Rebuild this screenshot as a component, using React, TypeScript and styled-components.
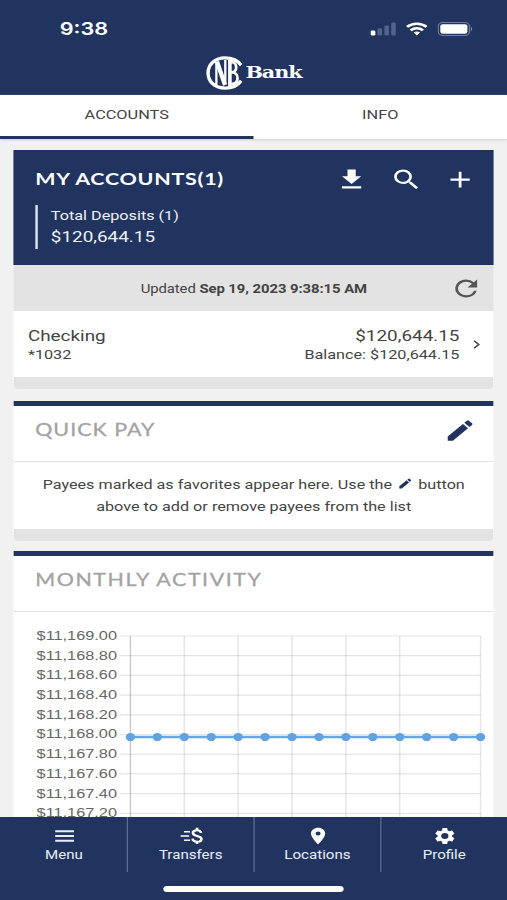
import React from "react";
import styled, { createGlobalStyle } from "styled-components";

const navy = "#21345f";

const GlobalStyle = createGlobalStyle`
  * { box-sizing: border-box; }
  html, body { margin: 0; padding: 0; overflow: hidden; background: #f1f1f1; }
  svg { display: block; flex: none; }
`;

const Page = styled.div`
  width: 416px;
  height: 900px;
  transform: scaleX(1.21875);
  transform-origin: 0 0;
  display: flex;
  flex-direction: column;
  overflow: hidden;
  background: #f1f1f1;
  color: #444;
  font-family: Roboto, "Liberation Sans", sans-serif;
`;

const Header = styled.header`
  flex: none;
  height: 95px;
  background: ${navy};
  color: #fff;
`;

const StatusBar = styled.div`
  height: 56px;
  padding: 1px 28.5px 0 49px;
  display: flex;
  align-items: center;
  justify-content: space-between;
`;

const Clock = styled.span`
  font: 600 17.8px/20px Inter, sans-serif;
`;

const StatusIcons = styled.div`
  display: flex;
  align-items: center;
  gap: 8px;
`;

const Brand = styled.div`
  height: 33px;
  padding-left: 168.5px;
  display: flex;
  align-items: center;
  gap: 2.5px;
`;

const BrandName = styled.span`
  font: bold 17px/20px "DejaVu Serif", serif;
  letter-spacing: -0.9px;
  padding-bottom: 1px;
`;

const Tabs = styled.nav`
  flex: none;
  height: 44px;
  display: flex;
  background: #fff;
  box-shadow: 0 1px 2px #ccc;
`;

const Tab = styled.div<{ $active?: boolean }>`
  flex: 1;
  padding-top: 10px;
  text-align: center;
  font-size: 13.4px;
  line-height: 20px;
  border-bottom: 3px solid ${(p) => (p.$active ? navy : "transparent")};
`;

const Content = styled.main`
  flex: 1;
  min-height: 0;
  overflow: hidden;
  padding: 11px 11px 0 11.4px;
`;

const Card = styled.section<{ $accent?: boolean }>`
  background: #fff;
  border-top: ${(p) => (p.$accent ? `5px solid ${navy}` : "0")};
  border-bottom: 12px solid #e3e3e3;
  border-radius: 0 0 4px 4px;
  margin-bottom: ${(p) => (p.$accent ? "10px" : "12px")};
`;

const Summary = styled.div`
  height: 115px;
  padding: 15px 14px 0 17.5px;
  background: ${navy};
  color: #fff;
`;

const TitleRow = styled.div`
  height: 28px;
  display: flex;
  align-items: center;
  justify-content: space-between;
`;

const Title = styled.h2<{ $spacing: number; $strong?: boolean }>`
  margin: 0;
  font-family: Lato, sans-serif;
  font-size: 17.6px;
  line-height: 24px;
  font-weight: ${(p) => (p.$strong ? 700 : 400)};
  -webkit-text-stroke: ${(p) => (p.$strong ? "0" : "0.3px #a3a3a3")};
  letter-spacing: ${(p) => p.$spacing}px;
`;

const Actions = styled.div`
  display: flex;
  gap: 17.5px;
`;

const Deposits = styled.div`
  height: 44px;
  margin-top: 11.5px;
  padding: 1.6px 0 0 10.8px;
  border-left: 2.5px solid #dfe4f2;
  color: #eef1fa;
`;

const Line = styled.div<{ $size: number; $height: number; $spacing?: number }>`
  font-size: ${(p) => p.$size}px;
  line-height: ${(p) => p.$height}px;
  letter-spacing: ${(p) => p.$spacing ?? 0}px;
  white-space: nowrap;
`;

const Updated = styled.div`
  height: 46px;
  padding: 1px 9px 0 104px;
  display: flex;
  align-items: center;
  justify-content: space-between;
  background: #e3e3e3;
  color: #444;
`;

const AccountRow = styled.div`
  height: 66px;
  padding: 14.5px 11px 0 11.5px;
  display: flex;
`;

const Amounts = styled.div`
  margin-left: auto;
  margin-right: 11px;
  text-align: right;
`;

const ChevronSlot = styled.div`
  padding-top: 14px;
`;

const CardHeader = styled.div`
  height: 56px;
  padding: 10px 14px 0 17.5px;
  border-bottom: 1.5px solid #e3e3e3;
  color: #a3a3a3;
`;

const Message = styled.div`
  height: 67px;
  padding-top: 12.4px;
  text-align: center;
`;

const InlineIcon = styled.span`
  display: inline-block;
  vertical-align: -1px;
  margin: 0 1px;
`;

const BottomBar = styled.footer`
  flex: none;
  height: 83px;
  background: ${navy};
  color: #e8edfa;
`;

const NavItems = styled.div`
  height: 55px;
  display: flex;
`;

const NavItem = styled.div`
  flex: 1;
  padding-top: 9px;
  display: flex;
  flex-direction: column;
  align-items: center;
  border-left: 1px solid #5f7097;
  &:first-child { border-color: transparent; }
`;

const HomeIndicator = styled.div`
  width: 148px;
  height: 6px;
  margin: 14px auto 0;
  border-radius: 3px;
  background: #fff;
`;

const Icon = ({ d, size = 27, color = "#fff" }: { d: string; size?: number; color?: string }) => (
  <svg width={size} height={size} viewBox="0 0 24 24" fill={color}><path d={d} /></svg>
);

const paths = {
  download: "M19 9h-4V3H9v6H5l7 7 7-7zM5 18v2h14v-2H5z",
  search: "M15.5 14h-.79l-.28-.27A6.471 6.471 0 0 0 16 9.5 6.5 6.5 0 1 0 9.5 16c1.61 0 3.09-.59 4.23-1.57l.27.28v.79l5 4.99L20.49 19l-4.99-5zm-6 0C7.01 14 5 11.99 5 9.5S7.01 5 9.5 5 14 7.01 14 9.5 11.99 14 9.5 14z",
  add: "M19 13h-6v6h-2v-6H5v-2h6V5h2v6h6v2z",
  refresh: "M17.65 6.35A7.958 7.958 0 0 0 12 4a8 8 0 1 0 7.73 10h-2.08A5.99 5.99 0 0 1 12 18a6 6 0 1 1 0-12c1.66 0 3.14.69 4.22 1.78L13 11h7V4l-2.35 2.35z",
  edit: "M3 17.25V21h3.75L17.81 9.94l-3.75-3.75L3 17.25zM20.71 7.04a.996.996 0 0 0 0-1.41l-2.34-2.34a.996.996 0 0 0-1.41 0l-1.83 1.83 3.75 3.75 1.83-1.83z",
  place: "M12 2C8.13 2 5 5.13 5 9c0 5.25 7 13 7 13s7-7.75 7-13c0-3.87-3.13-7-7-7zm0 9.5a2.5 2.5 0 0 1 0-5 2.5 2.5 0 0 1 0 5z",
  settings: "M19.14 12.94c.04-.3.06-.61.06-.94s-.02-.64-.07-.94l2.03-1.58a.49.49 0 0 0 .12-.61l-1.92-3.32a.488.488 0 0 0-.59-.22l-2.39.96c-.5-.38-1.03-.7-1.62-.94l-.36-2.54a.484.484 0 0 0-.48-.41h-3.84c-.24 0-.43.17-.47.41l-.36 2.54c-.59.24-1.13.57-1.62.94l-2.39-.96c-.22-.08-.47 0-.59.22L2.74 8.87c-.12.21-.08.47.12.61l2.03 1.58c-.05.3-.09.63-.09.94s.02.64.07.94l-2.03 1.58a.49.49 0 0 0-.12.61l1.92 3.32c.12.22.37.29.59.22l2.39-.96c.5.38 1.03.7 1.62.94l.36 2.54c.05.24.24.41.48.41h3.84c.24 0 .44-.17.47-.41l.36-2.54c.59-.24 1.13-.56 1.62-.94l2.39.96c.22.08.47 0 .59-.22l1.92-3.32a.49.49 0 0 0-.12-.61l-2.01-1.58zM12 15.6A3.6 3.6 0 1 1 12 8.4a3.6 3.6 0 0 1 0 7.2z",
};

const Signal = () => (
  <svg width="21" height="14" viewBox="0 0 21 14" fill="#52638c">
    <rect x="0" y="8.5" width="4" height="5" rx="1.2" fill="#fff" />
    <rect x="5.8" y="6.2" width="3.7" height="7.3" rx="1.2" />
    <rect x="11.4" y="3.4" width="3.7" height="10.1" rx="1.2" />
    <rect x="17" y="0.5" width="3.7" height="13" rx="1.2" />
  </svg>
);

const Wifi = () => (
  <svg width="18" height="14" viewBox="0 0 18 14" fill="none" stroke="#fff" strokeWidth="2.5">
    <path d="M1 4.9C5.4.6 12.6.6 17 4.9" />
    <path d="M4 8.3c2.8-2.7 7.2-2.7 10 0" />
    <path d="M6.4 10.5c1.5-1.4 3.7-1.4 5.2 0L9 13.6z" fill="#fff" stroke="none" />
  </svg>
);

const Battery = () => (
  <svg width="29" height="14" viewBox="0 0 29 14">
    <rect x="0.6" y="0.6" width="25.6" height="12.8" rx="3.6" fill="none" stroke="#6f7da0" />
    <rect x="2.3" y="2.2" width="22.2" height="9.6" rx="2" fill="#fff" />
    <path d="M27.4 4.9c1.4.6 1.4 3.6 0 4.2z" fill="#8792b0" />
  </svg>
);

const Monogram = () => (
  <svg width="30.4" height="34" viewBox="0 0 37 34" preserveAspectRatio="none" fill="none" stroke="#fff">
    <path d="M35.2 9.2C31.5 4 26 1.9 19 1.9 9 1.9 2.1 8.3 2.1 17s6.9 15.1 16.9 15.1c7 0 12.5-2.2 16.2-7.4" strokeWidth="3.4" />
    <path d="M10.4 6v23M19.3 4v24" strokeWidth="2.3" />
    <path d="M11 5.5 19 29" strokeWidth="4.2" />
    <path d="M23.9 4v26" strokeWidth="3.6" />
    <path d="M23 6.2h3c5.6 0 5.6 10.1 0 10.1h-2M26 16.3c7.4 0 7.4 11.5 0 11.5h-3" strokeWidth="2.7" />
  </svg>
);

const Chevron = () => (
  <svg width="6" height="9" viewBox="0 0 6 9" fill="none" stroke="#444" strokeWidth="1.4">
    <path d="M1 .8 4.8 4.5 1 8.2" />
  </svg>
);

const MenuLines = () => (
  <svg width="20" height="20" viewBox="0 0 20 20" stroke="#e8edfa" strokeWidth="1.9">
    <path d="M2.3 5.3h15.4M2.3 10h15.4M2.3 14.7h15.4" />
  </svg>
);

const TransferMoney = () => (
  <svg width="20" height="20" viewBox="0 0 20 20" fill="none" stroke="#fff" strokeWidth="1.6">
    <path d="M4 5.8h5M1.2 10h7M4 14.2h5" />
    <path d="M18 6.9c-.3-1.8-1.5-2.7-3.3-2.7-2 0-3.4 1-3.4 2.7 0 4 7 2 7 6 0 1.8-1.4 2.8-3.5 2.8-2.2 0-3.6-1-3.8-3M14.7 1.8v2.6M14.7 15.5V18" strokeWidth="2.1" />
  </svg>
);

const rows = ["$11,169.00", "$11,168.80", "$11,168.60", "$11,168.40", "$11,168.20", "$11,168.00", "$11,167.80", "$11,167.60", "$11,167.40", "$11,167.20"];
const firstX = 96;
const step = 22.1;
const topY = 24;
const rowStep = 19.7;
const points = Array.from({ length: 14 }, (_, i) => firstX + i * step);

const ActivityChart = () => (
  <svg width="393" height="225" viewBox="0 0 393 225">
    <g stroke="#000" strokeOpacity="0.1" strokeWidth="1.2">
      {rows.map((r, i) => <line key={r} x1="87" x2="383.5" y1={topY + i * rowStep} y2={topY + i * rowStep} />)}
      {[2, 4, 6, 8, 10, 13].map((i) => <line key={i} x1={points[i]} x2={points[i]} y1={topY} y2="225" />)}
      <line x1={firstX} x2={firstX} y1={topY} y2="225" strokeOpacity="0.2" />
    </g>
    <g fill="#666" fontFamily="Liberation Sans, Arial, sans-serif" fontSize="13.4" textAnchor="end">
      {rows.map((r, i) => <text key={r} x="85" y={topY + i * rowStep + 4}>{r}</text>)}
    </g>
    <line x1={firstX} x2={points[13]} y1="125" y2="125" stroke="#69a7e2" strokeWidth="2.4" />
    {points.map((x) => <ellipse key={x} cx={x} cy="125" rx="3.8" ry="4.1" fill="#61a2e0" />)}
  </svg>
);

const navItems = [
  { label: "Menu", icon: <MenuLines /> },
  { label: "Transfers", icon: <TransferMoney /> },
  { label: "Locations", icon: <Icon d={paths.place} size={20} /> },
  { label: "Profile", icon: <Icon d={paths.settings} size={20} /> },
];

export default function App() {
  return (
    <>
      <GlobalStyle />
      <Page>
        <Header>
          <StatusBar>
            <Clock>9:38</Clock>
            <StatusIcons><Signal /><Wifi /><Battery /></StatusIcons>
          </StatusBar>
          <Brand><Monogram /><BrandName>Bank</BrandName></Brand>
        </Header>
        <Tabs>
          <Tab $active>ACCOUNTS</Tab>
          <Tab>INFO</Tab>
        </Tabs>
        <Content>
          <Card>
            <Summary>
              <TitleRow>
                <Title $spacing={0.6} $strong>MY ACCOUNTS(1)</Title>
                <Actions>
                  <Icon d={paths.download} />
                  <Icon d={paths.search} />
                  <Icon d={paths.add} />
                </Actions>
              </TitleRow>
              <Deposits>
                <Line $size={13.3} $height={20}>Total Deposits (1)</Line>
                <Line $size={15.5} $height={23}>$120,644.15</Line>
              </Deposits>
            </Summary>
            <Updated>
              <Line $size={12.2} $height={20} $spacing={-0.05}>Updated <b>Sep 19, 2023 9:38:15 AM</b></Line>
              <Icon d={paths.refresh} color="#555" />
            </Updated>
            <AccountRow>
              <div>
                <Line $size={15.5} $height={20}>Checking</Line>
                <Line $size={13.3} $height={17}>*1032</Line>
              </div>
              <Amounts>
                <Line $size={15.5} $height={20}>$120,644.15</Line>
                <Line $size={13.3} $height={17}>Balance: $120,644.15</Line>
              </Amounts>
              <ChevronSlot><Chevron /></ChevronSlot>
            </AccountRow>
          </Card>
          <Card $accent>
            <CardHeader>
              <TitleRow>
                <Title $spacing={0.82}>QUICK PAY</Title>
                <Icon d={paths.edit} color={navy} />
              </TitleRow>
            </CardHeader>
            <Message>
              <Line $size={13.25} $height={22}>
                Payees marked as favorites appear here. Use the{" "}
                <InlineIcon><Icon d={paths.edit} size={13} color={navy} /></InlineIcon> button
              </Line>
              <Line $size={13.3} $height={22}>above to add or remove payees from the list</Line>
            </Message>
          </Card>
          <Card $accent>
            <CardHeader>
              <TitleRow><Title $spacing={1.27}>MONTHLY ACTIVITY</Title></TitleRow>
            </CardHeader>
            <ActivityChart />
          </Card>
        </Content>
        <BottomBar>
          <NavItems>
            {navItems.map((item) => (
              <NavItem key={item.label}>
                {item.icon}
                <Line $size={12.4} $height={18}>{item.label}</Line>
              </NavItem>
            ))}
          </NavItems>
          <HomeIndicator />
        </BottomBar>
      </Page>
    </>
  );
}
